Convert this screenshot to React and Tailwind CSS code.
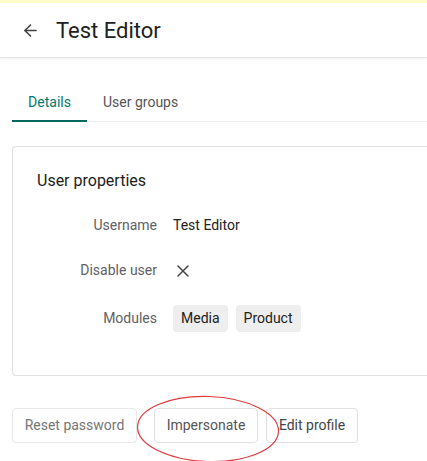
import React from 'react';
import { ArrowLeft, X } from 'lucide-react';

// User detail page: header, tabs, properties card and action buttons
export default function App() {
  const rows = [
    { label: 'Username', h: 'h-[45px]', value: <span className="text-[14px] text-[#212121]">Test Editor</span> },
    { label: 'Disable user', h: 'h-[45px]', value: <X className="h-5 w-5 text-[#424242]" strokeWidth={1.8} /> },
    {
      label: 'Modules',
      h: 'h-[51px]',
      value: (
        <div className="flex gap-2">
          {['Media', 'Product'].map(m => (
            <span key={m} className="rounded bg-[#eeeeee] px-2 py-[3px] text-[14px] text-[#212121]">{m}</span>
          ))}
        </div>
      )
    }
  ];

  return (
    <div className="h-[461px] w-[427px] overflow-hidden bg-white" style={{ fontFamily: 'Roboto, "Noto Sans", sans-serif' }}>
      <div className="h-[3px] bg-[#fffcc8]" />

      {/* Header */}
      <div className="flex h-[55px] items-center border-b border-[#e6e6e6] shadow-[0_1px_2px_rgba(0,0,0,0.06)]">
        <ArrowLeft className="ml-[21px] h-[19px] w-[19px] text-[#424242]" strokeWidth={2} />
        <h1 className="ml-4 text-[22px] text-[#212121]">Test Editor</h1>
      </div>

      {/* Tabs */}
      <div className="ml-3 mt-[32px] flex border-b border-[#eeeeee]">
        <div className="-mb-px w-[75px] border-b-2 border-[#00695c] pb-[7px] pt-[2px] text-center text-[14px] text-[#00796b]">
          Details
        </div>
        <div className="px-4 pb-[7px] pt-[2px] text-[14px] text-[#555555]">User groups</div>
      </div>

      {/* Card */}
      <div className="ml-3 mt-6 h-[230px] rounded-l-[4px] border border-r-0 border-[#e0e0e0] pl-6 pt-[22px]">
        <h2 className="text-[16px] text-[#212121]">User properties</h2>
        <div className="mt-[10px] flex flex-col">
          {rows.map(r => (
            <div key={r.label} className={`flex items-center ${r.h}`}>
              <span className="w-[120px] text-right text-[14px] text-[#616161]">{r.label}</span>
              <div className="ml-4 flex items-center">{r.value}</div>
            </div>
          ))}
        </div>
      </div>

      {/* Actions */}
      <div className="relative ml-3 mt-[32px] flex">
        <button className="h-[35px] w-[125px] rounded border border-[#e8e8e8] text-[14px] text-[#757575]">Reset password</button>
        <button className="ml-[17px] h-[35px] w-[104px] rounded border border-[#e0e0e0] text-[14px] text-[#555555]">Impersonate</button>
        <button className="ml-2 h-[35px] w-[92px] rounded border border-[#e0e0e0] text-[14px] text-[#444444]">Edit profile</button>
        <svg className="pointer-events-none absolute left-[113px] top-[-14px]" width="166" height="70" viewBox="0 0 166 70">
          <ellipse cx="83" cy="35" rx="70.5" ry="32.5" fill="none" stroke="#e0393c" strokeWidth="1.2" transform="rotate(2 83 35)" />
        </svg>
      </div>
    </div>
  );
}
